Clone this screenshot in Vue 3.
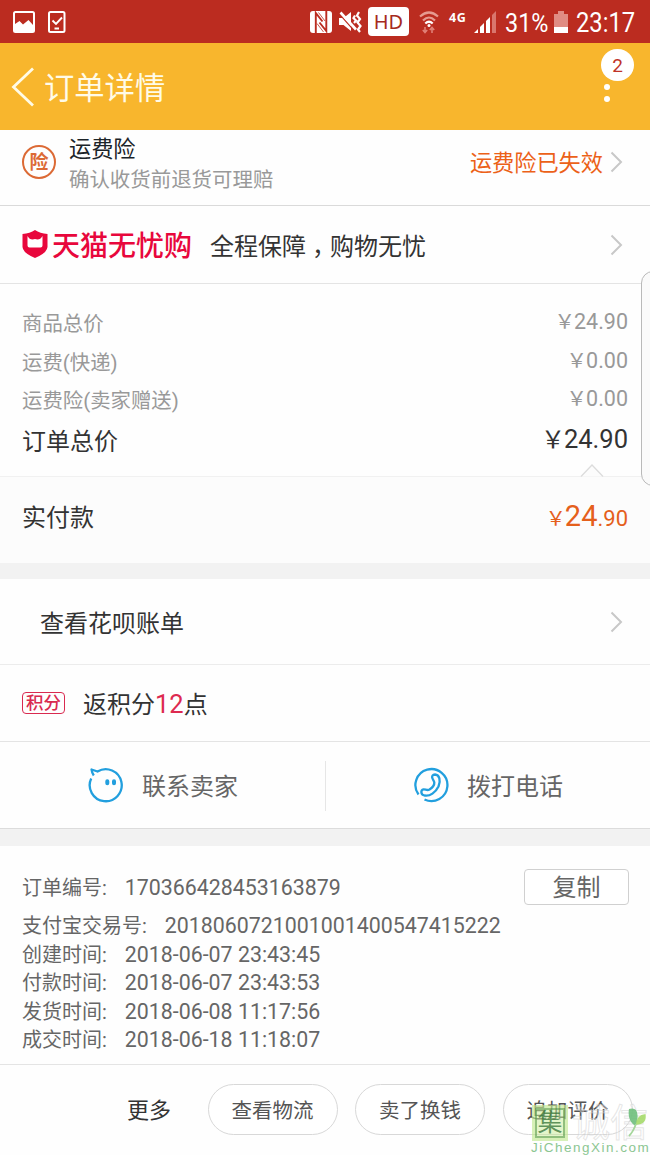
<script setup>
const prices = [
  { label: '商品总价', value: '24.90' },
  { label: '运费(快递)', value: '0.00' },
  { label: '运费险(卖家赠送)', value: '0.00' },
]
const times = [
  { label: '创建时间:', value: '2018-06-07 23:43:45' },
  { label: '付款时间:', value: '2018-06-07 23:43:53' },
  { label: '发货时间:', value: '2018-06-08 11:17:56' },
  { label: '成交时间:', value: '2018-06-18 11:18:07' },
]
const actions = ['查看物流', '卖了换钱', '追加评价']
</script>

<template>
  <div class="page">
    <header class="status">
      <svg class="s-pic" width="22" height="22" viewBox="0 0 22 22">
        <rect x="1" y="1" width="20" height="20" rx="1.5" fill="none" stroke="#fff" stroke-width="2" />
        <path d="M2 13 6.5 10 10 13.5 15.5 9 20 14V20H2Z" fill="#fff" />
      </svg>
      <svg class="s-task" width="18" height="22" viewBox="0 0 18 22">
        <rect x="1" y="1" width="15.5" height="20" rx="1.5" fill="none" stroke="#fff" stroke-width="2" />
        <path d="M4.5 9.5 8 13 14 6.5M6.5 17.5H11" fill="none" stroke="#fff" stroke-width="1.9" />
      </svg>
      <svg class="s-nfc" width="22" height="22" viewBox="0 0 22 22">
        <rect width="22" height="22" rx="3" fill="#fff" />
        <path d="M5.800 22V2L12.500 10.500" fill="none" stroke="#bb2c20" stroke-width="1.900" />
        <path d="M16.300 0V20L9.500 11.500" fill="none" stroke="#bb2c20" stroke-width="1.900" />
        <path d="M8.500 1.500 15 10M7 12.500 13.500 21" fill="none" stroke="#bb2c20" stroke-width=".800" />
      </svg>
      <svg class="s-mute" width="24" height="22" viewBox="0 0 24 22">
        <path d="M0 7H4.500L12 1V20L4.500 14H0Z" fill="#fff" />
        <path d="M0 2.500 16 20.500" stroke="#bb2c20" stroke-width="1.300" />
        <path d="M1.500 1.500 17 18.500" stroke="#fff" stroke-width="2.600" />
        <path d="M16 4.500 14.500 7 17 9.500 15 12M20 1 18 4.500 21 8 18.500 11.500 21.500 15 19 18.500 21 21" fill="none" stroke="#fff" stroke-width="2.200" />
      </svg>
      <span class="hd">HD</span>
      <svg class="s-wifi" width="20" height="23" viewBox="0 0 20 23" fill="none">
        <path d="M1 5.500Q10-2.500 19 5.500M4 9.500Q10 3.500 16 9.500" stroke="#e69a90" stroke-width="2.200" />
        <path d="M6.300 12.500Q10 9 13.700 12.500" stroke="#fff" stroke-width="2.200" />
        <circle cx="10" cy="14.500" r="1.500" fill="#fff" />
        <path d="M6 16V21M3.800 19 6 21.500 8.200 19M13 22V17M10.800 19 13 16.500 15.200 19" stroke="#e08077" stroke-width="1.600" />
      </svg>
      <span class="net">4G</span>
      <svg class="s-signal" width="22" height="22" viewBox="0 0 22 22">
        <path d="M0 22 4 18V22ZM6 22V16L10 12V22ZM12 22V10L16 6V22Z" fill="#fff" />
        <path d="M18 22V4L22 0V22Z" fill="#d9766d" />
      </svg>
      <span class="pct">31%</span>
      <svg class="s-batt" width="14" height="22" viewBox="0 0 14 22">
        <path d="M4 0H10V3H14V16H0V3H4Z" fill="#e08c83" />
        <path d="M0 16H14V22H0Z" fill="#fff" />
      </svg>
      <span class="clock">23:17</span>
    </header>

    <nav class="nav">
      <svg class="back" width="24" height="40" viewBox="0 0 24 40">
        <path d="M22 1.500 2.500 20 22 38.500" fill="none" stroke="#fffbe6" stroke-width="2.800" />
      </svg>
      <h1>订单详情</h1>
      <div class="more-menu">
        <span class="badge">2</span>
        <i class="dot"></i><i class="dot"></i>
      </div>
    </nav>

    <section class="row insurance">
      <span class="seal">险</span>
      <div class="ins-text">
        <strong>运费险</strong>
        <small>确认收货前退货可理赔</small>
      </div>
      <span class="ins-state">运费险已失效</span>
      <svg class="chev" width="13" height="22" viewBox="0 0 13 22"><path d="M1.500 1.500 11 11 1.500 20.500" /></svg>
    </section>

    <section class="row tmall">
      <svg class="shield" width="26" height="28" viewBox="0 0 26 28">
        <path d="M13 0Q18 3.600 25.500 4V17Q25 23 13 28 1 23 .500 17V4Q8 3.600 13 0Z" fill="#e8073c" />
        <path d="M5.500 6Q7.500 9.500 10.500 9.500 13 8.500 15.500 9.500 18.500 9.500 20.500 6V15.500Q20.500 17.500 18.500 17.500H7.500Q5.500 17.500 5.500 15.500Z" fill="#fff" />
      </svg>
      <b class="brand">天猫无忧购</b>
      <span class="slogan">全程保障<i>，</i>购物无忧</span>
      <svg class="chev" width="13" height="22" viewBox="0 0 13 22"><path d="M1.500 1.500 11 11 1.500 20.500" /></svg>
    </section>

    <section class="prices">
      <div v-for="p in prices" :key="p.label" class="price">
        <span>{{ p.label }}</span>
        <span class="amount"><i>￥</i>{{ p.value }}</span>
      </div>
      <div class="price total">
        <span>订单总价</span>
        <span class="amount"><i>￥</i>24.90</span>
      </div>
      <svg class="caret" width="24" height="14" viewBox="0 0 24 14">
        <path d="M1 13.500 12 2 23 13.500" fill="#fcfcfc" stroke="#dcdcdc" stroke-width="1.300" />
      </svg>
    </section>

    <section class="paid">
      <span>实付款</span>
      <span class="paid-amount"><i>￥</i><b>24</b>.90</span>
    </section>

    <section class="row bill">
      <span>查看花呗账单</span>
      <svg class="chev" width="13" height="22" viewBox="0 0 13 22"><path d="M1.500 1.500 11 11 1.500 20.500" /></svg>
    </section>

    <section class="row points">
      <span class="tag">积分</span>
      <span class="points-text">返积分<em>12</em>点</span>
    </section>

    <section class="contact">
      <div class="contact-item">
        <svg width="36" height="36" viewBox="0 0 36 36" fill="none" stroke="#229fde" stroke-width="2.300">
          <path d="M3.200 11.500A16 16 0 1 0 9.500 4.500L3.500 2.500Q3.800 5.500 5.800 8.500" stroke-linejoin="round" />
          <path d="M19.300 14.300V16.300M26 14.300V16.300" stroke-width="4" stroke-linecap="round" />
        </svg>
        <span>联系卖家</span>
      </div>
      <div class="contact-item">
        <svg width="36" height="36" viewBox="0 0 36 36" fill="none" stroke="#229fde" stroke-width="2.300">
          <path d="M5.500 27.500A16 16 0 1 1 11.500 32.500" />
          <path d="M19.500 11.500C18.300 9 19.800 7.500 22 7.500 26.500 7.800 28 13.500 25.500 19.500 22.500 25.500 17 29.500 11.500 28.500 7.500 27.500 7.500 23 10.500 22.300 12.500 22 14 24 16.500 22.500 19.500 20.500 21.500 18 21.300 15.500 21 13.500 20 13 19.500 11.500Z" />
        </svg>
        <span>拨打电话</span>
      </div>
    </section>

    <section class="info">
      <div class="line number"><span>订单编号:</span><span class="num">170366428453163879</span><button class="copy">复制</button></div>
      <div class="line trade"><span>支付宝交易号:</span><span class="num">2018060721001001400547415222</span></div>
      <div v-for="t in times" :key="t.label" class="line"><span>{{ t.label }}</span><span class="num">{{ t.value }}</span></div>
    </section>

    <footer class="footer">
      <span class="more">更多</span>
      <button v-for="a in actions" :key="a" class="pill">{{ a }}</button>
    </footer>

    <div class="side-panel"></div>

    <div class="watermark">
      <div class="wm-top">
        <span class="wm-box">集</span>
        <span class="wm-name">诚信</span>
      </div>
      <svg class="leaf" width="20" height="32" viewBox="0 0 20 32">
        <path d="M1 2Q9 0 9.500 8 10 14 7.500 19-1 14 1 2Z" fill="#6fbf7c" opacity=".9" />
        <path d="M8 18Q8 8 17.500 7 19.500 17 8 18Z" fill="#a5da6a" opacity=".9" />
        <path d="M8 17Q5 25 1 29" fill="none" stroke="#a5d69b" stroke-width="1.800" />
      </svg>
      <span class="wm-url">JiChengXin.com</span>
    </div>
  </div>
</template>

<style>
body { margin: 0; }
</style>

<style scoped>
* { box-sizing: border-box; }
.page {
  position: relative;
  width: 650px;
  height: 1155px;
  overflow: hidden;
  background: #fefefe;
  color: #333;
  font-family: Roboto, "Noto Sans CJK SC", sans-serif;
  font-size: 24px;
  line-height: 30px;
  white-space: nowrap;
}
i, em { font-style: normal; }
svg { display: block; flex: none; }

.status { display: flex; align-items: center; height: 43px; padding-left: 13px; background: #bb2c20; color: #fff; }
.s-task { margin-left: 13px; }
.s-nfc { margin-left: 244px; }
.s-mute { margin-left: 7px; }
.hd {
  width: 41px; height: 29px; margin-left: 5px; border-radius: 4px; background: #fff; color: #a52a20;
  font: 20px/29px "Noto Sans", sans-serif; text-align: center;
}
.s-wifi { margin-left: 10px; margin-top: 2px; }
.net { width: 18px; margin: -7px 0 0 10px; font: 700 12.500px/16px "Noto Sans", sans-serif; letter-spacing: .5px; }
.s-signal { margin-left: 7px; }
.pct { width: 43px; margin: 2px 0 0 9px; font-size: 26px; transform: scaleX(.9); transform-origin: left; }
.s-batt { margin-left: 6px; }
.clock { margin: 2px 0 0 8px; font-size: 27px; transform: scaleX(.88); transform-origin: left; }

.nav { display: flex; align-items: center; height: 87px; padding: 0 16px 0 11px; background: #f8b62d; }
.back { margin-right: 9px; }
h1 { flex: 1; margin: 5px 0 0; color: #fffbe8; font-size: 30.300px; font-weight: 400; line-height: 40px; }
.more-menu { display: flex; flex-direction: column; align-items: flex-start; width: 33px; height: 75px; }
.badge { width: 33px; height: 32px; border-radius: 16px; background: #fff; color: #c03328; font-size: 19px; line-height: 33px; text-align: center; }
.dot { width: 6px; height: 6px; margin: 3px 0 0 3px; border-radius: 3px; background: #fff; }
.dot + .dot { margin-top: 6px; }

.row { display: flex; align-items: center; padding: 0 27px 0 22px; }
.chev { margin-left: auto; fill: none; stroke: #c8c8c8; stroke-width: 2; }

.insurance { height: 76px; border-bottom: 1px solid #dadada; padding-bottom: 11px; }
.seal { width: 34px; height: 34px; border: 2px solid #dc6a35; border-radius: 50%; color: #dc6a35; font-size: 19px; font-weight: 700; line-height: 31px; text-align: center; }
.ins-text { display: flex; flex-direction: column; margin-left: 13px; }
.ins-text strong { margin-top: 6px; color: #1c2429; font-size: 22.200px; font-weight: 400; line-height: 30px; }
.ins-text small { color: #999; font-size: 20.450px; line-height: 32px; }
.ins-state { margin: 2px 0 0 auto; color: #ec6118; font-size: 22.200px; }
.insurance .chev { margin-left: 7px; }

.tmall { height: 78px; border-bottom: 1px solid #e4e4e4; }
.shield { margin-top: -2px; }
.brand { margin: 4px 0 0 4px; color: #e8073c; font-size: 28px; font-weight: 500; line-height: 40px; }
.slogan { margin: 4px 0 0 18px; }
.slogan i { margin-right: -6px; padding-left: 6px; }

.prices { position: relative; height: 193px; padding: 20px 22px 0; border-bottom: 1px solid #f1f1f1; }
.price { display: flex; justify-content: space-between; align-items: flex-start; height: 38.500px; color: #999; font-size: 20.400px; line-height: 40px; }
.amount { margin-top: -2px; font-size: 21.500px; }
.amount i { margin-right: -1px; font-size: 20.500px; }
.total { color: #333; font-size: 24px; line-height: 45px; }
.total .amount { margin-top: -3px; font-size: 25.500px; }
.total .amount i { font-size: 24px; }
.caret { position: absolute; right: 46px; bottom: -1px; }

.paid { display: flex; justify-content: space-between; height: 102px; padding: 21px 22px 0; border-bottom: 16px solid #f2f2f2; background: #fcfcfc; line-height: 40px; }
.paid-amount { margin-top: -2px; color: #e5601c; font-size: 22px; }
.paid-amount i { margin-right: -1px; font-size: 20px; }
.paid-amount b { font-size: 29px; font-weight: 400; }

.bill { height: 86px; padding-left: 40px; border-bottom: 1px solid #ececec; }
.bill span { margin-top: 4px; }
.points { height: 77px; border-bottom: 1px solid #e4e4e4; }
.tag { width: 43px; height: 22px; border: 1.500px solid #d92a50; border-radius: 4px; color: #d92a50; font-size: 17.500px; font-weight: 500; line-height: 20px; text-align: center; }
.points-text { margin: 2px 0 0 18px; }
.points em { color: #dd2a50; font-size: 25.500px; }

.contact { display: flex; align-items: center; height: 104px; border-bottom: 17px solid #f2f2f2; box-shadow: inset 0 -1px #dcdcdc; }
.contact-item { display: flex; flex: 1; align-items: center; height: 50px; padding-left: 88px; color: #666; }
.contact-item + .contact-item { padding-left: 87px; border-left: 1px solid #e6e6e6; }
.contact-item svg { margin-top: -1px; }
.contact-item span { margin: 3px 0 0 18px; }

.info { height: 219px; padding: 20px 21px 0 22px; border-bottom: 1px solid #e4e4e4; color: #666; font-size: 20px; }
.line { display: flex; align-items: center; height: 28.300px; line-height: 28px; }
.number { height: 44px; }
.trade { height: 32px; margin-bottom: -1px; }
.num { margin-left: 18px; font-size: 21.350px; }
.copy { width: 105px; height: 36px; margin: 0 0 0 auto; padding: 0; border: 1px solid #d0d0d0; border-radius: 4px; background: #fff; color: #666; font: inherit; font-size: 24px; line-height: 37px; }
.number .copy { margin-bottom: 2px; }

.footer { display: flex; align-items: center; height: 91px; padding-left: 127px; }
.more { width: 81px; margin-top: 1px; font-size: 22px; }
.pill { width: 130px; height: 51px; margin: -2px 17.500px 0 0; padding: 2px 0 0; flex: none; border: 1px solid #d8d8d8; border-radius: 26px; background: #fff; color: #555; font: inherit; font-size: 20.500px; line-height: 49px; }

.side-panel { position: absolute; top: 271px; left: 641px; width: 30px; height: 215px; border: 1px solid #b9b9b9; border-radius: 12px; background: #fafafa; }

.watermark { position: absolute; left: 530px; top: 1104px; width: 120px; height: 51px; }
.wm-top { display: flex; align-items: center; padding-left: 2px; }
.wm-box { width: 36px; height: 36px; border: 3px solid rgba(190, 230, 140, .3); background: rgba(200, 235, 150, .5); outline: 2px solid rgba(90, 155, 75, .6); outline-offset: -5px; color: rgba(60, 120, 60, .8); font-size: 25px; line-height: 30px; text-align: center; }
.wm-name { margin-left: 4px; color: rgba(255, 255, 255, .3); font-size: 38px; line-height: 38px; -webkit-text-stroke: 1px rgba(200, 200, 200, .45); }
.leaf { position: absolute; left: 98px; top: 3px; }
.wm-url { position: absolute; left: 1px; top: 36px; color: #8cc692; font: 13.500px/16px "Liberation Sans", sans-serif; letter-spacing: 1.500px; }
</style>
